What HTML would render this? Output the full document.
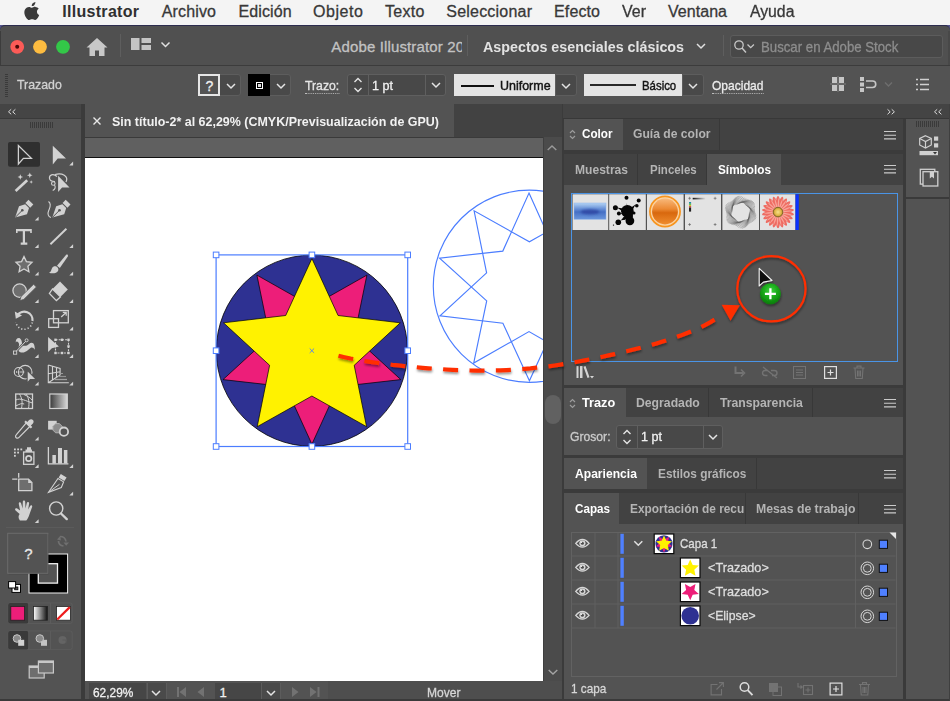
<!DOCTYPE html>
<html lang="es"><head><meta charset="utf-8"><title>Illustrator</title>
<style>
html,body{margin:0;padding:0;}
body{width:950px;height:701px;overflow:hidden;background:#3b3b3b;font-family:"Liberation Sans",sans-serif;position:relative;}
.a{position:absolute;}
.t{position:absolute;white-space:nowrap;line-height:1;}
svg{position:absolute;overflow:visible;}
</style></head><body>
<div class="a" style="left:0.0px;top:0.0px;width:950.0px;height:25.0px;background:#f4f4f4;"></div><svg style="left:24px;top:2px" width="15.400" height="18.200" viewBox="0 0 13.900 16.400" preserveAspectRatio="none"><path fill="#3a3a3a" d="M10.3 0c.1 1-.3 1.900-.9 2.600-.6.700-1.500 1.200-2.400 1.100-.1-.9.300-1.900.9-2.500C8.500.5 9.500.1 10.300 0zM13.300 6.100c-1 .600-1.600 1.500-1.600 2.700 0 1.400.800 2.500 2 3-.3.900-.700 1.700-1.200 2.500-.700 1-1.400 2-2.500 2s-1.400-.650-2.700-.650S5.700 16.300 4.700 16.300c-1.100 0-1.900-1-2.700-2.100C.4 11.900-.4 8.400 1.200 6.200c.8-1.100 2-1.800 3.300-1.800 1.100 0 2 .7 2.700.7.600 0 1.800-.800 3.100-.700 1.200.050 2.300.600 3 1.700z"/></svg><span class="t" style="left:62.3px;top:4.1px;font-size:16.0px;color:#303030;font-weight:bold;letter-spacing:0.29px;">Illustrator</span><span class="t" style="left:161.7px;top:4.1px;font-size:16.0px;color:#383838;font-weight:normal;letter-spacing:0.16px;-webkit-text-stroke:0.30px #383838;">Archivo</span><span class="t" style="left:238.5px;top:4.1px;font-size:16.0px;color:#383838;font-weight:normal;letter-spacing:0.12px;-webkit-text-stroke:0.30px #383838;">Edición</span><span class="t" style="left:313.0px;top:4.1px;font-size:16.0px;color:#383838;font-weight:normal;letter-spacing:0.53px;-webkit-text-stroke:0.30px #383838;">Objeto</span><span class="t" style="left:385.0px;top:4.1px;font-size:16.0px;color:#383838;font-weight:normal;letter-spacing:0.29px;-webkit-text-stroke:0.30px #383838;">Texto</span><span class="t" style="left:446.3px;top:4.1px;font-size:16.0px;color:#383838;font-weight:normal;letter-spacing:0.21px;-webkit-text-stroke:0.30px #383838;">Seleccionar</span><span class="t" style="left:554.0px;top:4.1px;font-size:16.0px;color:#383838;font-weight:normal;letter-spacing:0.13px;-webkit-text-stroke:0.30px #383838;">Efecto</span><span class="t" style="left:622.0px;top:4.1px;font-size:16.0px;color:#383838;font-weight:normal;transform:scaleX(0.999);transform-origin:0 50%;-webkit-text-stroke:0.30px #383838;">Ver</span><span class="t" style="left:668.0px;top:4.1px;font-size:16.0px;color:#383838;font-weight:normal;letter-spacing:0.04px;-webkit-text-stroke:0.30px #383838;">Ventana</span><span class="t" style="left:749.6px;top:4.1px;font-size:16.0px;color:#383838;font-weight:normal;transform:scaleX(0.985);transform-origin:0 50%;-webkit-text-stroke:0.30px #383838;">Ayuda</span><div class="a" style="left:0.0px;top:24.8px;width:950.0px;height:10.0px;background:#55558c;"></div><div class="a" style="left:0.0px;top:24.8px;width:950.0px;height:40.2px;background:#505050;border-top:1px solid #2c2c4e;box-sizing:border-box;border-radius:5px 5px 0 0;"></div><div class="a" style="left:947.5px;top:31.0px;width:2.5px;height:73.0px;background:#484848;"></div><div class="a" style="left:0.0px;top:31.0px;width:1.2px;height:670.0px;background:#3c3c3c;"></div><svg style="left:0;top:25px" width="120" height="40" viewBox="0 0 120 40"><circle cx="17.200" cy="21.800" r="6.900" fill="#fc5b57"/><circle cx="17.200" cy="21.800" r="2" fill="#4a0a08"/><circle cx="40" cy="21.800" r="6.900" fill="#fdbc40"/><circle cx="63" cy="21.800" r="6.900" fill="#33c748"/><path fill="#c8c8c8" d="M97 13l-10.500 9.500h3V31h5.500v-5.500h4V31h5.500v-8.500h3z"/></svg><div class="a" style="left:120.0px;top:34.0px;width:1.0px;height:23.0px;background:#5e5e5e;"></div><svg style="left:131px;top:38px" width="45" height="16" viewBox="0 0 45 16"><path fill="#c4c4c4" d="M0 0h8.500v12H0zM10.500 0H20v5h-9.500zM10.500 7H20v5h-9.500z"/><path d="M30.500 4.500l4 4 4-4" stroke="#e0e0e0" stroke-width="1.500" fill="none"/></svg><div class="a" style="left:325px;top:32px;width:136.500px;height:28px;overflow:hidden;"><span class="t" style="left:6.3px;top:7.3px;font-size:15.0px;color:#c2c2c2;font-weight:normal;letter-spacing:0.14px;-webkit-text-stroke:0.30px #c2c2c2;">Adobe Illustrator 2020</span></div><div class="a" style="left:467.0px;top:35.0px;width:1.0px;height:21.0px;background:#5e5e5e;"></div><span class="t" style="left:482.5px;top:38.8px;font-size:15.0px;color:#e2e2e2;font-weight:bold;transform:scaleX(0.953);transform-origin:0 50%;">Aspectos esenciales clásicos</span><svg style="left:695px;top:42px" width="12" height="8" viewBox="0 0 12 8"><path d="M2 2l4 4 4-4" stroke="#e0e0e0" stroke-width="1.500" fill="none"/></svg><div class="a" style="left:722.5px;top:35.0px;width:1.0px;height:21.0px;background:#5e5e5e;"></div><div class="a" style="left:730.0px;top:35.0px;width:213.0px;height:23.0px;background:#484848;border:1px solid #5c5c5c;box-sizing:border-box;border-radius:3px;"></div><svg style="left:733px;top:39px" width="24" height="16" viewBox="0 0 24 16"><circle cx="6" cy="6" r="4.200" stroke="#c8c8c8" stroke-width="1.300" fill="none"/><path d="M9 9l4 4.500" stroke="#c8c8c8" stroke-width="1.400"/><path d="M14.500 5.500l3.200 3.200 3.200-3.200" stroke="#c8c8c8" stroke-width="1.300" fill="none"/></svg><span class="t" style="left:760.7px;top:39.5px;font-size:14.5px;color:#8d8d8d;font-weight:normal;transform:scaleX(0.911);transform-origin:0 50%;-webkit-text-stroke:0.30px #8d8d8d;">Buscar en Adobe Stock</span><div class="a" style="left:0.0px;top:65.0px;width:950.0px;height:39.0px;background:#535353;border-top:1px solid #3c3c3c;box-sizing:border-box;"></div><svg style="left:5px;top:74px" width="4" height="24" viewBox="0 0 4 24"><path d="M0 .5h3M0 2.500h3M0 4.500h3M0 6.500h3M0 8.500h3M0 10.500h3M0 12.500h3M0 14.500h3M0 16.500h3M0 18.500h3M0 20.500h3M0 22.500h3" stroke="#3a3a3a" stroke-width="1"/></svg><span class="t" style="left:17.2px;top:78.2px;font-size:13.5px;color:#d2d2d2;font-weight:normal;transform:scaleX(0.914);transform-origin:0 50%;-webkit-text-stroke:0.30px #d2d2d2;">Trazado</span><div class="a" style="left:219.0px;top:74.0px;width:22.0px;height:22.0px;background:#494949;border:1px solid #5d5d5d;box-sizing:border-box;border-radius:0 3px 3px 0;"></div><div class="a" style="left:198.0px;top:74.0px;width:21.5px;height:22.0px;background:#535353;border:2px solid #e6e6e6;box-sizing:border-box;"></div><span class="t" style="left:205.5px;top:78.6px;font-size:14.0px;color:#f0f0f0;font-weight:normal;-webkit-text-stroke:0.30px #f0f0f0;">?</span><svg style="left:224.5px;top:81.5px" width="12" height="8" viewBox="0 0 12 8"><path d="M2 2l4 4 4-4" stroke="#e4e4e4" stroke-width="1.500" fill="none"/></svg><div class="a" style="left:269.0px;top:74.0px;width:22.0px;height:22.0px;background:#494949;border:1px solid #5d5d5d;box-sizing:border-box;border-radius:0 3px 3px 0;"></div><div class="a" style="left:248.0px;top:74.0px;width:21.5px;height:22.0px;background:#000;"></div><div class="a" style="left:255.5px;top:81.5px;width:7.0px;height:7.0px;background:#000;border:1.500px solid #fff;box-sizing:border-box;"></div><div class="a" style="left:257.5px;top:83.5px;width:3.0px;height:3.0px;background:#ddd;"></div><svg style="left:274.5px;top:81.5px" width="12" height="8" viewBox="0 0 12 8"><path d="M2 2l4 4 4-4" stroke="#e4e4e4" stroke-width="1.500" fill="none"/></svg><span class="t" style="left:305.0px;top:78.6px;font-size:13.5px;color:#e6e6e6;font-weight:normal;transform:scaleX(0.906);transform-origin:0 50%;border-bottom:1px dotted #bdbdbd;padding-bottom:1px;-webkit-text-stroke:0.30px #e6e6e6;">Trazo:</span><div class="a" style="left:346.5px;top:73.5px;width:99.5px;height:22.5px;background:#484848;border:1px solid #5f5f5f;box-sizing:border-box;border-radius:3px;"></div><div class="a" style="left:367.5px;top:74.5px;width:1.0px;height:20.5px;background:#5f5f5f;"></div><div class="a" style="left:425.0px;top:74.5px;width:1.0px;height:20.5px;background:#5f5f5f;"></div><svg style="left:351.5px;top:74.8px" width="12" height="20" viewBox="0 0 12 20"><path d="M2.500 7l3.500-3.500L9.500 7M2.500 13l3.500 3.500L9.500 13" stroke="#e4e4e4" stroke-width="1.400" fill="none"/></svg><svg style="left:430.0px;top:81.2px" width="12" height="8" viewBox="0 0 12 8"><path d="M2 2l4 4 4-4" stroke="#e4e4e4" stroke-width="1.500" fill="none"/></svg><span class="t" style="left:372.0px;top:78.6px;font-size:13.5px;color:#f2f2f2;font-weight:normal;transform:scaleX(0.932);transform-origin:0 50%;-webkit-text-stroke:0.30px #f2f2f2;">1 pt</span><div class="a" style="left:555.0px;top:74.0px;width:21.5px;height:22.0px;background:#494949;border:1px solid #5d5d5d;box-sizing:border-box;border-radius:0 3px 3px 0;"></div><div class="a" style="left:453.5px;top:74.0px;width:101.5px;height:22.0px;background:#e4e4e4;"></div><div class="a" style="left:460.5px;top:85.0px;width:33.5px;height:2.0px;background:#111;"></div><span class="t" style="left:499.7px;top:78.6px;font-size:13.5px;color:#141414;font-weight:normal;transform:scaleX(0.924);transform-origin:0 50%;-webkit-text-stroke:0.45px #141414;">Uniforme</span><svg style="left:560.0px;top:81.5px" width="12" height="8" viewBox="0 0 12 8"><path d="M2 2l4 4 4-4" stroke="#e4e4e4" stroke-width="1.500" fill="none"/></svg><div class="a" style="left:682.0px;top:74.0px;width:21.5px;height:22.0px;background:#494949;border:1px solid #5d5d5d;box-sizing:border-box;border-radius:0 3px 3px 0;"></div><div class="a" style="left:584.0px;top:74.0px;width:98.0px;height:22.0px;background:#e4e4e4;"></div><div class="a" style="left:590.0px;top:84.0px;width:45.5px;height:2.0px;background:#2a2a2a;"></div><span class="t" style="left:641.8px;top:78.6px;font-size:13.5px;color:#141414;font-weight:normal;transform:scaleX(0.844);transform-origin:0 50%;-webkit-text-stroke:0.45px #141414;">Básico</span><svg style="left:687.0px;top:81.5px" width="12" height="8" viewBox="0 0 12 8"><path d="M2 2l4 4 4-4" stroke="#e4e4e4" stroke-width="1.500" fill="none"/></svg><span class="t" style="left:712.0px;top:78.6px;font-size:13.5px;color:#ececec;font-weight:normal;transform:scaleX(0.891);transform-origin:0 50%;border-bottom:1px dotted #bdbdbd;padding-bottom:1px;-webkit-text-stroke:0.30px #ececec;">Opacidad</span><svg style="left:830px;top:76px" width="110" height="18" viewBox="0 0 110 18"><path fill="#c6c6c6" d="M2 1h5v6H2zM9 1h5v6H9zM2 9h5v6H2zM9 9h5v6H9z"/><path d="M0 8h16M8 0v16" stroke="#8a8a8a" stroke-width="0.800"/><path fill="#c6c6c6" d="M30 1h4v4h-4zM30 6.500h4v4h-4zM30 12h4v4h-4z"/><path d="M36 5h6.500a3 3 0 0 1 0 6.500H36" stroke="#c6c6c6" stroke-width="1.600" fill="none"/><path d="M55 6.500l3.500 3.500 3.500-3.500" stroke="#6e6e6e" stroke-width="1.400" fill="none"/><path d="M86 3.500h2M86 8.500h2M86 13.500h2M90 3.500h9M90 8.500h9M90 13.500h9" stroke="#d0d0d0" stroke-width="1.700"/></svg><div class="a" style="left:0.0px;top:103.5px;width:950.0px;height:1.0px;background:#404040;"></div><div class="a" style="left:0.0px;top:104.0px;width:81.0px;height:15.0px;background:#454545;border-bottom:1px solid #3a3a3a;box-sizing:border-box;"></div><div class="a" style="left:0.0px;top:119.0px;width:81.0px;height:582.0px;background:#535353;"></div><div class="a" style="left:81.0px;top:104.0px;width:3.5px;height:597.0px;background:#3b3b3b;"></div><svg style="left:7.8px;top:108.9px" width="8" height="6" viewBox="0 0 8 6"><path d="M3.200 .3L.5 2.800l2.700 2.500M7.400 .3L4.700 2.800l2.700 2.500" fill="none" stroke="#dcdcdc" stroke-width="1"/></svg><svg style="left:29.500px;top:122px" width="24" height="7" viewBox="0 0 24 7"><path d="M.5 0v6M2.500 0v6M4.500 0v6M6.500 0v6M8.500 0v6M10.500 0v6M12.500 0v6M14.500 0v6M16.500 0v6M18.500 0v6M20.500 0v6M22.500 0v6" stroke="#3a3a3a" stroke-width="1"/></svg><div class="a" style="left:84.5px;top:104.0px;width:477.0px;height:33.0px;background:#424242;"></div><div class="a" style="left:84.5px;top:104.0px;width:369.5px;height:33.0px;background:#535353;"></div><svg style="left:92px;top:116px" width="10" height="10" viewBox="0 0 10 10"><path d="M1.500 1.500l7 7M8.500 1.500l-7 7" stroke="#e8e8e8" stroke-width="1.400"/></svg><span class="t" style="left:112.0px;top:114.5px;font-size:13.0px;color:#f2f2f2;font-weight:bold;transform:scaleX(0.959);transform-origin:0 50%;">Sin título-2* al 62,29% (CMYK/Previsualización de GPU)</span><div class="a" style="left:84.5px;top:137.0px;width:458.5px;height:20.0px;background:#606060;border-top:1px solid #3a3a3a;box-sizing:border-box;"></div><div class="a" style="left:84.5px;top:156.5px;width:458.5px;height:524.5px;background:#fff;border-top:1.500px solid #111;box-sizing:border-box;"></div><div class="a" style="left:543.0px;top:137.0px;width:18.5px;height:544.0px;background:#4b4b4b;border-left:1px solid #3f3f3f;box-sizing:border-box;"></div><svg style="left:546.400px;top:144.200px" width="12" height="8" viewBox="0 0 12 8"><path d="M1.700 6l4.300-4 4.300 4" stroke="#9a9a9a" stroke-width="1.400" fill="none"/></svg><svg style="left:546.600px;top:668px" width="12" height="8" viewBox="0 0 12 8"><path d="M1.700 2l4.300 4 4.300-4" stroke="#a4a4a4" stroke-width="1.400" fill="none"/></svg><div class="a" style="left:544.6px;top:395.0px;width:16.0px;height:28.7px;background:#616161;border-radius:8px;"></div><div class="a" style="left:84.5px;top:681.0px;width:477.0px;height:20.0px;background:#535353;"></div><div class="a" style="left:88.5px;top:683.0px;width:57.5px;height:18.0px;background:#464646;"></div><span class="t" style="left:92.7px;top:685.6px;font-size:13.0px;color:#f0f0f0;font-weight:normal;transform:scaleX(0.914);transform-origin:0 50%;-webkit-text-stroke:0.30px #f0f0f0;">62,29%</span><div class="a" style="left:146.5px;top:683.0px;width:20.0px;height:18.0px;background:#4a4a4a;border-left:1px solid #5c5c5c;border-right:1px solid #5c5c5c;box-sizing:border-box;"></div><svg style="left:150.0px;top:688.5px" width="12" height="8" viewBox="0 0 12 8"><path d="M2 2l4 4 4-4" stroke="#e4e4e4" stroke-width="1.500" fill="none"/></svg><svg style="left:175px;top:686px" width="150" height="12" viewBox="0 0 150 12"><path fill="#727272" d="M2 1h2v10H2zM11 1v10L4.500 6zM29 1v10L22.500 6z"/><path fill="#727272" d="M117 1v10l6.500-5zM135 1v10l6.500-5zM142.500 1h2v10h-2z"/></svg><div class="a" style="left:215.0px;top:683.0px;width:45.5px;height:18.0px;background:#464646;"></div><span class="t" style="left:219.5px;top:685.6px;font-size:13.0px;color:#f0f0f0;font-weight:normal;-webkit-text-stroke:0.30px #f0f0f0;">1</span><div class="a" style="left:260.5px;top:683.0px;width:20.5px;height:18.0px;background:#4a4a4a;border-left:1px solid #5c5c5c;border-right:1px solid #5c5c5c;box-sizing:border-box;"></div><svg style="left:264.5px;top:688.5px" width="12" height="8" viewBox="0 0 12 8"><path d="M2 2l4 4 4-4" stroke="#e4e4e4" stroke-width="1.500" fill="none"/></svg><div class="a" style="left:328.0px;top:681.0px;width:233.5px;height:20.0px;background:#4e4e4e;"></div><span class="t" style="left:427.0px;top:685.6px;font-size:13.0px;color:#d6d6d6;font-weight:normal;transform:scaleX(0.927);transform-origin:0 50%;-webkit-text-stroke:0.30px #d6d6d6;">Mover</span><div class="a" style="left:561.5px;top:104.0px;width:388.5px;height:597.0px;background:#3b3b3b;"></div><div class="a" style="left:563.2px;top:104.0px;width:386.8px;height:14.0px;background:#444444;"></div><div class="a" style="left:563.2px;top:117.8px;width:386.8px;height:1.2px;background:#383838;"></div><svg style="left:887.3px;top:108.9px" width="8" height="6" viewBox="0 0 8 6"><path d="M.5 .3l2.700 2.500-2.700 2.500M4.700 .3l2.700 2.500-2.700 2.500" fill="none" stroke="#dcdcdc" stroke-width="1"/></svg><svg style="left:934.3px;top:108.9px" width="8" height="6" viewBox="0 0 8 6"><path d="M3.200 .3L.5 2.800l2.700 2.500M7.400 .3L4.700 2.800l2.700 2.500" fill="none" stroke="#dcdcdc" stroke-width="1"/></svg><div class="a" style="left:563.6px;top:119.0px;width:339.4px;height:31.0px;background:#424242;"></div><div class="a" style="left:563.8px;top:119.0px;width:59.4px;height:31.0px;background:#535353;"></div><span class="t" style="left:582.0px;top:127.2px;font-size:13.0px;color:#ffffff;font-weight:bold;transform:scaleX(0.898);transform-origin:0 50%;">Color</span><div class="a" style="left:623.2px;top:119.0px;width:97.2px;height:31.0px;background:#424242;border-right:1px solid #383838;box-sizing:border-box;"></div><span class="t" style="left:633.3px;top:127.2px;font-size:13.0px;color:#b4b4b4;font-weight:bold;transform:scaleX(0.933);transform-origin:0 50%;">Guía de color</span><svg style="left:884.0px;top:130px" width="12" height="10" viewBox="0 0 12 10"><path d="M0 1.500h12M0 5.200h12M0 8.900h12" stroke="#cacaca" stroke-width="1.100"/></svg><svg style="left:569.0px;top:129.0px" width="7" height="11" viewBox="0 0 7 11"><path d="M1 4l2.500-2.500L6 4M1 7l2.500 2.500L6 7" stroke="#9c9c9c" stroke-width="1.200" fill="none"/></svg><div class="a" style="left:563.6px;top:153.5px;width:339.4px;height:31.0px;background:#424242;"></div><div class="a" style="left:563.8px;top:153.5px;width:74.5px;height:31.0px;background:#424242;border-right:1px solid #383838;box-sizing:border-box;"></div><span class="t" style="left:575.2px;top:162.6px;font-size:13.0px;color:#b4b4b4;font-weight:bold;transform:scaleX(0.929);transform-origin:0 50%;">Muestras</span><div class="a" style="left:638.3px;top:153.5px;width:69.0px;height:31.0px;background:#424242;border-right:1px solid #383838;box-sizing:border-box;"></div><span class="t" style="left:649.7px;top:162.6px;font-size:13.0px;color:#b4b4b4;font-weight:bold;transform:scaleX(0.885);transform-origin:0 50%;">Pinceles</span><div class="a" style="left:707.3px;top:153.5px;width:73.3px;height:31.0px;background:#535353;"></div><span class="t" style="left:718.0px;top:162.6px;font-size:13.0px;color:#ffffff;font-weight:bold;transform:scaleX(0.906);transform-origin:0 50%;">Símbolos</span><svg style="left:884.0px;top:164px" width="12" height="10" viewBox="0 0 12 10"><path d="M0 1.500h12M0 5.200h12M0 8.900h12" stroke="#cacaca" stroke-width="1.100"/></svg><div class="a" style="left:563.6px;top:184.5px;width:339.4px;height:200.0px;background:#535353;"></div><div class="a" style="left:570.5px;top:192.5px;width:327.0px;height:169.0px;background:#535353;border:1px solid #4a94e6;box-sizing:border-box;"></div><div class="a" style="left:563.6px;top:388.0px;width:339.4px;height:29.0px;background:#424242;"></div><div class="a" style="left:563.8px;top:388.0px;width:61.8px;height:29.0px;background:#535353;"></div><span class="t" style="left:582.0px;top:395.9px;font-size:13.0px;color:#ffffff;font-weight:bold;transform:scaleX(0.980);transform-origin:0 50%;">Trazo</span><div class="a" style="left:625.6px;top:388.0px;width:83.6px;height:29.0px;background:#424242;border-right:1px solid #383838;box-sizing:border-box;"></div><span class="t" style="left:635.5px;top:395.9px;font-size:13.0px;color:#b4b4b4;font-weight:bold;transform:scaleX(0.940);transform-origin:0 50%;">Degradado</span><div class="a" style="left:709.2px;top:388.0px;width:104.3px;height:29.0px;background:#424242;border-right:1px solid #383838;box-sizing:border-box;"></div><span class="t" style="left:720.3px;top:395.9px;font-size:13.0px;color:#b4b4b4;font-weight:bold;transform:scaleX(0.940);transform-origin:0 50%;">Transparencia</span><svg style="left:884.0px;top:398px" width="12" height="10" viewBox="0 0 12 10"><path d="M0 1.500h12M0 5.200h12M0 8.900h12" stroke="#cacaca" stroke-width="1.100"/></svg><svg style="left:569.0px;top:397.5px" width="7" height="11" viewBox="0 0 7 11"><path d="M1 4l2.500-2.500L6 4M1 7l2.500 2.500L6 7" stroke="#9c9c9c" stroke-width="1.200" fill="none"/></svg><div class="a" style="left:563.6px;top:417.0px;width:339.4px;height:38.0px;background:#535353;"></div><span class="t" style="left:570.3px;top:429.6px;font-size:13.5px;color:#cccccc;font-weight:normal;transform:scaleX(0.900);transform-origin:0 50%;-webkit-text-stroke:0.30px #cccccc;">Grosor:</span><div class="a" style="left:615.5px;top:425.0px;width:107.5px;height:23.5px;background:#484848;border:1px solid #5f5f5f;box-sizing:border-box;border-radius:3px;"></div><div class="a" style="left:636.5px;top:426.0px;width:1.0px;height:21.5px;background:#5f5f5f;"></div><div class="a" style="left:702.5px;top:426.0px;width:1.0px;height:21.5px;background:#5f5f5f;"></div><svg style="left:620.5px;top:426.8px" width="12" height="20" viewBox="0 0 12 20"><path d="M2.500 7l3.500-3.500L9.500 7M2.500 13l3.500 3.500L9.500 13" stroke="#e4e4e4" stroke-width="1.400" fill="none"/></svg><svg style="left:707.2px;top:433.2px" width="12" height="8" viewBox="0 0 12 8"><path d="M2 2l4 4 4-4" stroke="#e4e4e4" stroke-width="1.500" fill="none"/></svg><span class="t" style="left:641.0px;top:430.1px;font-size:13.5px;color:#f2f2f2;font-weight:normal;transform:scaleX(0.932);transform-origin:0 50%;-webkit-text-stroke:0.30px #f2f2f2;">1 pt</span><div class="a" style="left:563.6px;top:457.9px;width:339.4px;height:31.6px;background:#424242;"></div><div class="a" style="left:563.8px;top:457.9px;width:83.5px;height:31.6px;background:#535353;"></div><span class="t" style="left:574.7px;top:466.5px;font-size:13.0px;color:#ffffff;font-weight:bold;transform:scaleX(0.931);transform-origin:0 50%;">Apariencia</span><div class="a" style="left:647.3px;top:457.9px;width:109.7px;height:31.6px;background:#424242;border-right:1px solid #383838;box-sizing:border-box;"></div><span class="t" style="left:657.6px;top:466.5px;font-size:13.0px;color:#b4b4b4;font-weight:bold;transform:scaleX(0.913);transform-origin:0 50%;">Estilos gráficos</span><svg style="left:884.0px;top:469px" width="12" height="10" viewBox="0 0 12 10"><path d="M0 1.500h12M0 5.200h12M0 8.900h12" stroke="#cacaca" stroke-width="1.100"/></svg><div class="a" style="left:563.6px;top:493.2px;width:339.4px;height:30.8px;background:#424242;"></div><div class="a" style="left:563.6px;top:493.2px;width:55.8px;height:30.8px;background:#535353;"></div><span class="t" style="left:574.7px;top:501.5px;font-size:13.0px;color:#fff;font-weight:bold;transform:scaleX(0.897);transform-origin:0 50%;">Capas</span><div class="a" style="left:619.7px;top:493px;width:126px;height:31px;overflow:hidden;border-right:1px solid #383838;box-sizing:border-box;"><span class="t" style="left:10.3px;top:8.5px;font-size:13.0px;color:#b4b4b4;font-weight:bold;transform:scaleX(0.914);transform-origin:0 50%;">Exportación de recursos</span></div><div class="a" style="left:745.7px;top:493.0px;width:113.0px;height:31.0px;background:#424242;border-right:1px solid #383838;box-sizing:border-box;"></div><span class="t" style="left:756.0px;top:501.5px;font-size:13.0px;color:#b4b4b4;font-weight:bold;transform:scaleX(0.943);transform-origin:0 50%;">Mesas de trabajo</span><svg style="left:884.0px;top:504px" width="12" height="10" viewBox="0 0 12 10"><path d="M0 1.500h12M0 5.200h12M0 8.900h12" stroke="#cacaca" stroke-width="1.100"/></svg><div class="a" style="left:563.6px;top:524.0px;width:339.4px;height:177.0px;background:#535353;"></div><div class="a" style="left:570.5px;top:531.5px;width:326.0px;height:145.5px;background:#535353;border:1px solid #626262;box-sizing:border-box;"></div><div class="a" style="left:905.6px;top:119.0px;width:44.4px;height:582.0px;background:#535353;"></div><div class="a" style="left:903.4px;top:119.0px;width:2.2px;height:582.0px;background:#3a3a3a;"></div><div class="a" style="left:906.0px;top:197.0px;width:44.0px;height:1.5px;background:#3a3a3a;"></div><svg style="left:916px;top:121px" width="24" height="7" viewBox="0 0 24 7"><path d="M.5 0v6M2.500 0v6M4.500 0v6M6.500 0v6M8.500 0v6M10.500 0v6M12.500 0v6M14.500 0v6M16.500 0v6M18.500 0v6M20.500 0v6M22.500 0v6" stroke="#3a3a3a" stroke-width="1"/></svg><svg style="left:0;top:0" width="950" height="701" viewBox="0 0 950 701"><defs><clipPath id="cv"><rect x="84.500" y="158" width="458.500" height="523"/></clipPath><filter id="ds" x="-5%" y="-20%" width="110%" height="150%"><feDropShadow dx="0" dy="1.500" stdDeviation="1.200" flood-color="#000" flood-opacity="0.450"/></filter></defs><g clip-path="url(#cv)"><circle cx="311.9" cy="350.7" r="95.600" fill="#2e3192" stroke="#000" stroke-width="0.800"/><polygon points="311.9,444.2 285.7,386.7 223.0,379.6 269.6,336.9 256.9,275.1 311.9,306.2 366.9,275.1 354.2,336.9 400.8,379.6 338.1,386.7" fill="#ed1e79" stroke="#000" stroke-width="0.700"/><polygon points="311.9,258.5 338.1,315.5 400.3,322.8 354.2,365.3 366.6,426.7 311.9,396.0 257.2,426.7 269.6,365.3 223.5,322.8 285.7,315.5" fill="#fff200" stroke="#000" stroke-width="0.700"/><rect x="216.100" y="254.900" width="191.600" height="191.600" fill="none" stroke="#4b7dff" stroke-width="1.200"/><rect x="213.3" y="252.1" width="5.600" height="5.600" fill="#fff" stroke="#4b7dff" stroke-width="1"/><rect x="213.3" y="347.9" width="5.600" height="5.600" fill="#fff" stroke="#4b7dff" stroke-width="1"/><rect x="213.3" y="443.7" width="5.600" height="5.600" fill="#fff" stroke="#4b7dff" stroke-width="1"/><rect x="309.1" y="252.1" width="5.600" height="5.600" fill="#fff" stroke="#4b7dff" stroke-width="1"/><rect x="309.1" y="443.7" width="5.600" height="5.600" fill="#fff" stroke="#4b7dff" stroke-width="1"/><rect x="404.9" y="252.1" width="5.600" height="5.600" fill="#fff" stroke="#4b7dff" stroke-width="1"/><rect x="404.9" y="347.9" width="5.600" height="5.600" fill="#fff" stroke="#4b7dff" stroke-width="1"/><rect x="404.9" y="443.7" width="5.600" height="5.600" fill="#fff" stroke="#4b7dff" stroke-width="1"/><path d="M309.700 348.500l4.400 4.400M314.100 348.500l-4.400 4.400" stroke="#4b7dff" stroke-width="0.900"/><g fill="none" stroke="#4b7dff" stroke-width="1.150"><circle cx="529.4" cy="286.2" r="96.100"/><polygon points="529.4,380.8 502.9,323.2 440.0,315.8 486.6,272.9 474.1,210.8 529.4,241.8 584.7,210.8 572.2,272.9 618.8,315.8 555.9,323.2"/><polygon points="529.0,193.1 555.2,251.1 618.4,258.1 571.3,300.9 584.3,363.1 529.0,331.6 473.7,363.1 486.7,300.9 439.6,258.1 502.8,251.1"/></g></g></svg><svg style="left:0;top:0" width="950" height="701" viewBox="0 0 950 701"><defs><linearGradient id="g1" x1="0" y1="0" x2="0" y2="1"><stop offset="0" stop-color="#b4d4f4"/><stop offset="0.350" stop-color="#6a92d8"/><stop offset="0.550" stop-color="#456fc4"/><stop offset="1" stop-color="#6a96dc"/></linearGradient><filter id="bl1" x="-30%" y="-100%" width="160%" height="300%"><feGaussianBlur stdDeviation="1.300"/></filter><linearGradient id="g3" x1="0" y1="0" x2="0" y2="1"><stop offset="0" stop-color="#f8b87a"/><stop offset="0.400" stop-color="#ec8a34"/><stop offset="0.550" stop-color="#d8680e"/><stop offset="1" stop-color="#ef8c2e"/></linearGradient><linearGradient id="g4" x1="0" y1="0" x2="1" y2="0"><stop offset="0" stop-color="#111"/><stop offset="1" stop-color="#111" stop-opacity="0"/></linearGradient><radialGradient id="g6"><stop offset="0" stop-color="#f4e08a"/><stop offset="0.650" stop-color="#e2b84a"/><stop offset="1" stop-color="#b08a2a"/></radialGradient></defs><rect x="572.6" y="194.3" width="35.6" height="35.7" fill="#e3e3e3"/><rect x="609.2" y="194.3" width="36.6" height="35.7" fill="#e3e3e3"/><rect x="647.0" y="194.3" width="36.6" height="35.7" fill="#e3e3e3"/><rect x="685.0" y="194.3" width="36.0" height="35.7" fill="#e3e3e3"/><rect x="722.4" y="194.3" width="36.6" height="35.7" fill="#e3e3e3"/><rect x="760.0" y="194.3" width="35.4" height="35.7" fill="#e3e3e3"/><rect x="574" y="203" width="32" height="16.300" fill="url(#g1)"/><ellipse cx="590" cy="211.800" rx="9.500" ry="2.600" fill="#2a3f9e" opacity="0.750" filter="url(#bl1)"/><rect x="574" y="203" width="32" height="16.300" fill="none" stroke="#8fb4ea" stroke-width="0.500"/><g fill="#050505"><circle cx="627.400" cy="211.300" r="6.300"/><circle cx="629.900" cy="220.800" r="4.400"/><ellipse cx="629" cy="216" rx="4" ry="4.500"/><circle cx="626.5" cy="197.8" r="2.0"/><circle cx="638.7" cy="200.4" r="2.0"/><circle cx="636.8" cy="205.8" r="1.8"/><circle cx="615.4" cy="207.7" r="2.5"/><circle cx="618.9" cy="213.4" r="2.0"/><circle cx="618.3" cy="222.2" r="2.8"/><circle cx="613.5" cy="225.1" r="0.7"/><circle cx="634.0" cy="213.0" r="1.5"/><circle cx="624.0" cy="218.5" r="1.3"/><path d="M627 211L626.700 203L628.500 211zM629 209L635.500 204.500L632 211zM626 209L617 207.500L624 212.500zM625 212L620 213.500L626 214.500zM626 215L620.500 220.500L628 219z" stroke="none"/></g><circle cx="665" cy="211.500" r="15.100" fill="#fbd3a2" stroke="#f7941e" stroke-width="1.700"/><circle cx="665" cy="211.500" r="12.900" fill="url(#g3)"/><rect x="692.700" y="197.800" width="13" height="1.600" fill="url(#g4)"/><g stroke="#444" stroke-width="0.500"><path d="M689.600 196.800v3M688.200 198.300h2.800M715.100 196.800v3M713.700 198.300h2.800M689.600 223v3M688.200 224.500h2.800M715.100 223v3M713.700 224.500h2.800"/></g><rect x="689" y="202" width="2.100" height="1.400" fill="#28a"/><rect x="689" y="203.400" width="2.100" height="1.400" fill="#3a4"/><rect x="689" y="204.800" width="2.100" height="1.400" fill="#cc3"/><rect x="689" y="206.200" width="2.100" height="1.400" fill="#c33"/><rect x="689" y="207.600" width="2.100" height="4" fill="#222"/><path d="M749.9 208.1L755.7 218.9M750.1 208.9L755.0 220.1M750.1 209.8L753.9 221.1M750.0 210.7L752.7 221.9M749.7 211.6L751.4 222.5M749.5 212.3L750.2 223.1M749.4 213.1L749.1 223.8M749.4 213.9L748.1 224.6M749.4 214.7L747.2 225.6M749.5 215.6L746.2 226.6M749.4 216.5L745.1 227.5M749.3 217.3L743.8 228.2M748.8 218.1L742.4 228.6M748.2 218.7L741.0 228.5M747.5 219.2L739.6 228.1M746.6 219.5L738.3 227.4M745.8 219.7L737.1 226.6M745.0 219.9L736.0 225.9M744.3 220.2L734.9 225.3M743.6 220.5L733.7 224.8M742.9 221.0L732.4 224.5M742.2 221.5L731.0 224.2M741.4 221.9L729.6 223.7M740.5 222.2L728.4 222.9M739.7 222.2L727.4 221.9M738.8 222.0L726.7 220.6M738.0 221.6L726.4 219.2M737.3 221.0L726.3 217.7M736.7 220.4L726.4 216.3M736.2 219.8L726.5 214.9M735.6 219.3L726.5 213.7M734.9 218.9L726.2 212.4M734.2 218.5L725.9 211.1M733.4 218.1L725.5 209.8M732.6 217.6L725.2 208.3M732.0 217.0L725.3 206.9M731.5 216.3L725.7 205.5M731.3 215.5L726.4 204.3M731.3 214.6L727.5 203.3M731.4 213.7L728.7 202.5M731.7 212.8L730.0 201.9M731.9 212.1L731.2 201.3M732.0 211.3L732.3 200.6M732.0 210.5L733.3 199.8M732.0 209.7L734.2 198.8M731.9 208.8L735.2 197.8M732.0 207.9L736.3 196.9M732.1 207.1L737.6 196.2M732.6 206.3L739.0 195.8M733.2 205.7L740.4 195.9M733.9 205.2L741.8 196.3M734.8 204.9L743.1 197.0M735.6 204.7L744.3 197.8M736.4 204.5L745.4 198.5M737.1 204.2L746.5 199.1M737.8 203.9L747.7 199.6M738.5 203.4L749.0 199.9M739.2 202.9L750.4 200.2M740.0 202.5L751.8 200.7M740.9 202.2L753.0 201.5M741.7 202.2L754.0 202.5M742.6 202.4L754.7 203.8M743.4 202.8L755.0 205.2M744.1 203.4L755.1 206.7M744.7 204.0L755.0 208.1M745.2 204.6L754.9 209.5M745.8 205.1L754.9 210.7M746.5 205.5L755.2 212.0M747.2 205.9L755.5 213.3M748.0 206.3L755.9 214.6M748.8 206.8L756.2 216.1M749.4 207.4L756.1 217.5" stroke="#555" stroke-width="0.400" fill="none" opacity="0.900"/><g fill="#ee6c62"><ellipse cx="778" cy="203.800" rx="2.100" ry="7.800" transform="rotate(0.0 778 212.100)"/><ellipse cx="778" cy="203.800" rx="2.100" ry="7.800" transform="rotate(16.4 778 212.100)"/><ellipse cx="778" cy="203.800" rx="2.100" ry="7.800" transform="rotate(32.7 778 212.100)"/><ellipse cx="778" cy="203.800" rx="2.100" ry="7.800" transform="rotate(49.1 778 212.100)"/><ellipse cx="778" cy="203.800" rx="2.100" ry="7.800" transform="rotate(65.5 778 212.100)"/><ellipse cx="778" cy="203.800" rx="2.100" ry="7.800" transform="rotate(81.8 778 212.100)"/><ellipse cx="778" cy="203.800" rx="2.100" ry="7.800" transform="rotate(98.2 778 212.100)"/><ellipse cx="778" cy="203.800" rx="2.100" ry="7.800" transform="rotate(114.5 778 212.100)"/><ellipse cx="778" cy="203.800" rx="2.100" ry="7.800" transform="rotate(130.9 778 212.100)"/><ellipse cx="778" cy="203.800" rx="2.100" ry="7.800" transform="rotate(147.3 778 212.100)"/><ellipse cx="778" cy="203.800" rx="2.100" ry="7.800" transform="rotate(163.6 778 212.100)"/><ellipse cx="778" cy="203.800" rx="2.100" ry="7.800" transform="rotate(180.0 778 212.100)"/><ellipse cx="778" cy="203.800" rx="2.100" ry="7.800" transform="rotate(196.4 778 212.100)"/><ellipse cx="778" cy="203.800" rx="2.100" ry="7.800" transform="rotate(212.7 778 212.100)"/><ellipse cx="778" cy="203.800" rx="2.100" ry="7.800" transform="rotate(229.1 778 212.100)"/><ellipse cx="778" cy="203.800" rx="2.100" ry="7.800" transform="rotate(245.5 778 212.100)"/><ellipse cx="778" cy="203.800" rx="2.100" ry="7.800" transform="rotate(261.8 778 212.100)"/><ellipse cx="778" cy="203.800" rx="2.100" ry="7.800" transform="rotate(278.2 778 212.100)"/><ellipse cx="778" cy="203.800" rx="2.100" ry="7.800" transform="rotate(294.5 778 212.100)"/><ellipse cx="778" cy="203.800" rx="2.100" ry="7.800" transform="rotate(310.9 778 212.100)"/><ellipse cx="778" cy="203.800" rx="2.100" ry="7.800" transform="rotate(327.3 778 212.100)"/><ellipse cx="778" cy="203.800" rx="2.100" ry="7.800" transform="rotate(343.6 778 212.100)"/></g><g fill="#f8a49a"><ellipse cx="778" cy="204.500" rx="0.700" ry="6.200" transform="rotate(3.0 778 212.100)"/><ellipse cx="778" cy="204.500" rx="0.700" ry="6.200" transform="rotate(19.4 778 212.100)"/><ellipse cx="778" cy="204.500" rx="0.700" ry="6.200" transform="rotate(35.7 778 212.100)"/><ellipse cx="778" cy="204.500" rx="0.700" ry="6.200" transform="rotate(52.1 778 212.100)"/><ellipse cx="778" cy="204.500" rx="0.700" ry="6.200" transform="rotate(68.5 778 212.100)"/><ellipse cx="778" cy="204.500" rx="0.700" ry="6.200" transform="rotate(84.8 778 212.100)"/><ellipse cx="778" cy="204.500" rx="0.700" ry="6.200" transform="rotate(101.2 778 212.100)"/><ellipse cx="778" cy="204.500" rx="0.700" ry="6.200" transform="rotate(117.5 778 212.100)"/><ellipse cx="778" cy="204.500" rx="0.700" ry="6.200" transform="rotate(133.9 778 212.100)"/><ellipse cx="778" cy="204.500" rx="0.700" ry="6.200" transform="rotate(150.3 778 212.100)"/><ellipse cx="778" cy="204.500" rx="0.700" ry="6.200" transform="rotate(166.6 778 212.100)"/><ellipse cx="778" cy="204.500" rx="0.700" ry="6.200" transform="rotate(183.0 778 212.100)"/><ellipse cx="778" cy="204.500" rx="0.700" ry="6.200" transform="rotate(199.4 778 212.100)"/><ellipse cx="778" cy="204.500" rx="0.700" ry="6.200" transform="rotate(215.7 778 212.100)"/><ellipse cx="778" cy="204.500" rx="0.700" ry="6.200" transform="rotate(232.1 778 212.100)"/><ellipse cx="778" cy="204.500" rx="0.700" ry="6.200" transform="rotate(248.5 778 212.100)"/><ellipse cx="778" cy="204.500" rx="0.700" ry="6.200" transform="rotate(264.8 778 212.100)"/><ellipse cx="778" cy="204.500" rx="0.700" ry="6.200" transform="rotate(281.2 778 212.100)"/><ellipse cx="778" cy="204.500" rx="0.700" ry="6.200" transform="rotate(297.5 778 212.100)"/><ellipse cx="778" cy="204.500" rx="0.700" ry="6.200" transform="rotate(313.9 778 212.100)"/><ellipse cx="778" cy="204.500" rx="0.700" ry="6.200" transform="rotate(330.3 778 212.100)"/><ellipse cx="778" cy="204.500" rx="0.700" ry="6.200" transform="rotate(346.6 778 212.100)"/></g><circle cx="778" cy="212.100" r="4.800" fill="url(#g6)" stroke="#6e5a1c" stroke-width="0.800"/><rect x="795.500" y="194.300" width="3.300" height="35.700" fill="#0a32ff"/></svg><svg style="left:0;top:0" width="950" height="701" viewBox="0 0 950 701"><g transform="translate(576.500 366)"><path fill="#d4d4d4" d="M0 0h2v12H0zM3.500 0h2.500v12H3.500zM7 .8l2-.8 4 11.200-2 .8z"/><path fill="#d4d4d4" d="M13.500 10h4l-2 2.500z"/></g><g transform="translate(734 366.500)" fill="none" stroke="#737373" stroke-width="2"><path d="M1.500 0v6.500h8"/><path d="M7 3l3.500 3.500L7 10" stroke-width="1.600"/></g><g transform="translate(761 366)" fill="none" stroke="#737373" stroke-width="1.400"><path d="M7 4.500H4a2.500 2.500 0 0 0 0 5h2.500M10 4.500h3.500a2.500 2.500 0 0 1 0 5H11M2 1l14 11"/></g><g transform="translate(793 366)" fill="none" stroke="#737373" stroke-width="1"><rect x=".5" y=".5" width="12" height="12"/><path d="M3 4h7M3 6.500h7M3 9h7" /></g><g transform="translate(824 366)" fill="none" stroke="#e0e0e0" stroke-width="1.200"><rect x=".6" y=".6" width="11.800" height="11.800"/><path d="M6.500 3.500v6M3.500 6.500h6"/></g><g transform="translate(853.500 365.500)" fill="none" stroke="#737373" stroke-width="1.100"><path d="M0 2.500h11M3.500 2.500V.6h4v1.900M1.500 2.500l.7 10.500h6.600l.7-10.500M4 5v6M5.500 5v6M7 5v6"/></g></svg><svg style="left:0;top:0" width="950" height="701" viewBox="0 0 950 701"><rect x="571.500" y="555.5" width="324" height="1" fill="#606060"/><rect x="571.500" y="579.5" width="324" height="1" fill="#606060"/><rect x="571.500" y="603.5" width="324" height="1" fill="#606060"/><rect x="571.500" y="627.5" width="324" height="1" fill="#606060"/><rect x="594.500" y="533" width="1" height="95" fill="#606060"/><rect x="617.500" y="533" width="1" height="95" fill="#606060"/><rect x="855" y="533" width="1" height="95" fill="#606060"/><path d="M575.7 543.3q6.700-7.800 13.400 0q-6.700 7.800-13.400 0z" fill="none" stroke="#d6d6d6" stroke-width="1.300"/><circle cx="582.4" cy="543.3" r="3.100" fill="#d6d6d6"/><circle cx="582.4" cy="543.3" r="1.500" fill="#4a4a4a"/><circle cx="581.5" cy="542.4" r="0.700" fill="#e6e6e6"/><rect x="620.400" y="533.8" width="3.400" height="20" fill="#4f80ff"/><circle cx="867.300" cy="544.3" r="4.300" fill="none" stroke="#d6d6d6" stroke-width="1.100"/><rect x="879.300" y="540.2" width="8.200" height="8.200" fill="#4f80ff" stroke="#111" stroke-width="1"/><path d="M575.7 567.3q6.700-7.800 13.400 0q-6.700 7.800-13.400 0z" fill="none" stroke="#d6d6d6" stroke-width="1.300"/><circle cx="582.4" cy="567.3" r="3.100" fill="#d6d6d6"/><circle cx="582.4" cy="567.3" r="1.500" fill="#4a4a4a"/><circle cx="581.5" cy="566.4" r="0.700" fill="#e6e6e6"/><rect x="620.400" y="557.8" width="3.400" height="20" fill="#4f80ff"/><circle cx="867.300" cy="568.3" r="6.300" fill="none" stroke="#d6d6d6" stroke-width="1"/><circle cx="867.300" cy="568.3" r="3.900" fill="none" stroke="#d6d6d6" stroke-width="1"/><rect x="879.300" y="564.2" width="8.200" height="8.200" fill="#4f80ff" stroke="#111" stroke-width="1"/><path d="M575.7 591.3q6.700-7.800 13.400 0q-6.700 7.800-13.400 0z" fill="none" stroke="#d6d6d6" stroke-width="1.300"/><circle cx="582.4" cy="591.3" r="3.100" fill="#d6d6d6"/><circle cx="582.4" cy="591.3" r="1.500" fill="#4a4a4a"/><circle cx="581.5" cy="590.4" r="0.700" fill="#e6e6e6"/><rect x="620.400" y="581.8" width="3.400" height="20" fill="#4f80ff"/><circle cx="867.300" cy="592.3" r="6.300" fill="none" stroke="#d6d6d6" stroke-width="1"/><circle cx="867.300" cy="592.3" r="3.900" fill="none" stroke="#d6d6d6" stroke-width="1"/><rect x="879.300" y="588.2" width="8.200" height="8.200" fill="#4f80ff" stroke="#111" stroke-width="1"/><path d="M575.7 615.3q6.700-7.800 13.400 0q-6.700 7.800-13.400 0z" fill="none" stroke="#d6d6d6" stroke-width="1.300"/><circle cx="582.4" cy="615.3" r="3.100" fill="#d6d6d6"/><circle cx="582.4" cy="615.3" r="1.500" fill="#4a4a4a"/><circle cx="581.5" cy="614.4" r="0.700" fill="#e6e6e6"/><rect x="620.400" y="605.8" width="3.400" height="20" fill="#4f80ff"/><circle cx="867.300" cy="616.3" r="6.300" fill="none" stroke="#d6d6d6" stroke-width="1"/><circle cx="867.300" cy="616.3" r="3.900" fill="none" stroke="#d6d6d6" stroke-width="1"/><rect x="879.300" y="612.2" width="8.200" height="8.200" fill="#4f80ff" stroke="#111" stroke-width="1"/><path d="M634.300 541.300l4 4 4-4" stroke="#e0e0e0" stroke-width="1.500" fill="none"/><path d="M889.500 532.500h6.500v6.500z" fill="#e6e6e6"/><rect x="654.2" y="534.0" width="19.600" height="19.600" fill="#fff" stroke="#0a0a0a" stroke-width="1.200"/><circle cx="664" cy="543.800" r="8.600" fill="#2e3192"/><polygon points="664.0,552.4 661.6,547.1 655.8,546.5 660.1,542.5 658.9,536.8 664.0,539.7 669.1,536.8 667.9,542.5 672.2,546.5 666.4,547.1" fill="#ed1e79"/><polygon points="664.0,535.5 666.4,540.7 672.0,541.3 667.8,545.1 668.9,550.7 664.0,547.9 659.1,550.7 660.2,545.1 656.0,541.3 661.6,540.7" fill="#fff200"/><rect x="680.4" y="558.0" width="19.600" height="19.600" fill="#fff" stroke="#0a0a0a" stroke-width="1.200"/><polygon points="690.2,559.4 692.7,564.9 698.8,565.6 694.3,569.7 695.5,575.7 690.2,572.7 684.9,575.7 686.1,569.7 681.6,565.6 687.7,564.9" fill="#fff200"/><rect x="680.4" y="582.0" width="19.600" height="19.600" fill="#fff" stroke="#0a0a0a" stroke-width="1.200"/><polygon points="690.2,600.2 687.7,594.7 681.6,594.0 686.1,589.9 684.9,583.9 690.2,586.9 695.5,583.9 694.3,589.9 698.8,594.0 692.7,594.7" fill="#ed1e79"/><rect x="680.4" y="606.0" width="19.600" height="19.600" fill="#fff" stroke="#0a0a0a" stroke-width="1.200"/><circle cx="690.200" cy="615.800" r="8.800" fill="#2e3192"/><g transform="translate(710.500 682)" fill="none" stroke="#737373" stroke-width="1.100"><path d="M7 2.500H.6v10.400h10.400V7"/><path d="M6 7.500L12.500 1M8.500.6h4.400V5"/></g><g transform="translate(739 681.500)" fill="none" stroke="#dcdcdc" stroke-width="1.500"><circle cx="5.500" cy="5.500" r="4.300"/><path d="M8.700 8.700l4.800 5" stroke-width="1.900"/></g><g transform="translate(769 683)" stroke="#737373" stroke-width="1"><rect x=".5" y=".5" width="8" height="8" fill="#737373"/><rect x="4" y="4" width="8.500" height="8.500" fill="none"/></g><g transform="translate(797 683)" fill="none" stroke="#737373" stroke-width="1.100"><path d="M1 0v4h4M3.500 2.500l1.700 1.500-1.700 1.500"/><rect x="6.500" y="2.500" width="9" height="9"/><path d="M11 4.500v5M8.500 7h5"/></g><g transform="translate(829.500 682.500)" fill="none" stroke="#e0e0e0" stroke-width="1.200"><rect x=".6" y=".6" width="11.800" height="11.800"/><path d="M6.500 3.500v6M3.500 6.500h6"/></g><g transform="translate(859 682)" fill="none" stroke="#737373" stroke-width="1.100"><path d="M0 2.500h11M3.500 2.500V.6h4v1.900M1.500 2.500l.7 10.500h6.600l.7-10.500M4 5v6M5.500 5v6M7 5v6"/></g></svg><span class="t" style="left:680.3px;top:537.1px;font-size:13.5px;color:#dedede;font-weight:normal;transform:scaleX(0.854);transform-origin:0 50%;-webkit-text-stroke:0.30px #dedede;">Capa 1</span><span class="t" style="left:707.7px;top:561.2px;font-size:13.5px;color:#dedede;font-weight:normal;transform:scaleX(0.938);transform-origin:0 50%;-webkit-text-stroke:0.30px #dedede;">&lt;Trazado&gt;</span><span class="t" style="left:707.7px;top:585.2px;font-size:13.5px;color:#dedede;font-weight:normal;transform:scaleX(0.938);transform-origin:0 50%;-webkit-text-stroke:0.30px #dedede;">&lt;Trazado&gt;</span><span class="t" style="left:707.7px;top:609.2px;font-size:13.5px;color:#dedede;font-weight:normal;transform:scaleX(0.906);transform-origin:0 50%;-webkit-text-stroke:0.30px #dedede;">&lt;Elipse&gt;</span><span class="t" style="left:571.3px;top:681.6px;font-size:13.5px;color:#d6d6d6;font-weight:normal;transform:scaleX(0.871);transform-origin:0 50%;-webkit-text-stroke:0.30px #d6d6d6;">1 capa</span><svg style="left:0;top:0" width="950" height="701" viewBox="0 0 950 701"><g transform="translate(919 135)" fill="none" stroke="#d0d0d0" stroke-width="1.200"><path d="M6.500 .7l5.800 2.800v6.500l-5.800 3-5.800-3V3.500z"/><path d="M.7 3.500l5.800 3 5.800-3M6.500 6.500V13"/></g><rect x="934" y="136.500" width="4.200" height="4.200" fill="#d0d0d0"/><rect x="934" y="143.300" width="4.200" height="4.200" fill="#d0d0d0"/><rect x="919.500" y="151" width="18.500" height="4.200" fill="#d0d0d0"/><path d="M933 152h4l-2 2.500z" fill="#333"/><g fill="none" stroke="#d0d0d0" stroke-width="1.300"><rect x="920.300" y="169.300" width="14.500" height="14.800"/><rect x="923" y="171.700" width="14.800" height="14.300" fill="#535353"/></g><path d="M929.800 171.700h4.200v6.800l-2.100-1.800-2.100 1.800z" fill="#d0d0d0"/></svg><svg style="left:0;top:0" width="84" height="701" viewBox="0 0 84 701"><rect x="8" y="142" width="32" height="24.700" rx="2" fill="#2f2f2f"/><path d="M73.1 165.4v-3.800l-3.800 3.800z" fill="#d2d2d2"/><path d="M38.6 220.5v-3.800l-3.800 3.800z" fill="#d2d2d2"/><path d="M38.6 248.0v-3.800l-3.800 3.800z" fill="#d2d2d2"/><path d="M73.1 248.0v-3.800l-3.800 3.800z" fill="#d2d2d2"/><path d="M38.6 275.5v-3.800l-3.800 3.800z" fill="#d2d2d2"/><path d="M73.1 275.5v-3.800l-3.800 3.800z" fill="#d2d2d2"/><path d="M38.6 303.0v-3.800l-3.800 3.800z" fill="#d2d2d2"/><path d="M73.1 303.0v-3.800l-3.800 3.800z" fill="#d2d2d2"/><path d="M38.6 330.5v-3.800l-3.800 3.800z" fill="#d2d2d2"/><path d="M73.1 330.5v-3.800l-3.800 3.800z" fill="#d2d2d2"/><path d="M38.6 358.0v-3.800l-3.800 3.800z" fill="#d2d2d2"/><path d="M73.1 358.0v-3.800l-3.800 3.800z" fill="#d2d2d2"/><path d="M38.6 385.5v-3.800l-3.800 3.800z" fill="#d2d2d2"/><path d="M73.1 385.5v-3.800l-3.800 3.800z" fill="#d2d2d2"/><path d="M38.6 440.5v-3.800l-3.800 3.800z" fill="#d2d2d2"/><path d="M38.6 468.0v-3.800l-3.800 3.800z" fill="#d2d2d2"/><path d="M73.1 468.0v-3.800l-3.800 3.800z" fill="#d2d2d2"/><path d="M73.1 495.5v-3.800l-3.800 3.800z" fill="#d2d2d2"/><path d="M38.6 523.0v-3.800l-3.800 3.800z" fill="#d2d2d2"/><path d="M18.400 145.500v18.500l5-5.600h8z" fill="none" stroke="#d2d2d2" stroke-width="1.300" stroke-linejoin="miter"/><path d="M52.800 145.800v18.700l4.900-6h8.300z" fill="#d2d2d2"/><path d="M15.600 191l11.600-10.800" stroke="#d2d2d2" stroke-width="2.600"/><path d="M20.3 174.2l0.78 2.02 2.02 0.78 -2.02 0.78 -0.78 2.02 -0.78 -2.02 -2.02 -0.78 2.02 -0.78z" fill="#d2d2d2"/><path d="M29.8 172.4l0.78 2.02 2.02 0.78 -2.02 0.78 -0.78 2.02 -0.78 -2.02 -2.02 -0.78 2.02 -0.78z" fill="#d2d2d2"/><path d="M31.2 180.2l0.50 1.30 1.30 0.50 -1.30 0.50 -0.50 1.30 -0.50 -1.30 -1.30 -0.50 1.30 -0.50z" fill="#d2d2d2"/><path d="M57 176.500c-4-3.500-8-1.500-7.500 2 .3 2.200 3 3 5.500 3M66 182c3-6-4-9.500-11-7.500" fill="none" stroke="#d2d2d2" stroke-width="1.200"/><circle cx="53.300" cy="183.500" r="1.800" fill="none" stroke="#d2d2d2" stroke-width="1.100"/><path d="M54.500 185c1.500 2.500.5 4.500-1.800 5.500" fill="none" stroke="#d2d2d2" stroke-width="1.100"/><path d="M58.100 175.700v16.300l4-4.600h7.400z" fill="#d2d2d2"/><g transform="translate(0.0 0)"><path d="M15.100 217.500l3.900-11.200 6.200-2 3.800 3.800-2 6.200z" fill="#d2d2d2"/><path d="M15.100 217.500l6.800-6.800" stroke="#535353" stroke-width="1"/><circle cx="22.300" cy="210.300" r="1.300" fill="#535353"/><path d="M25.400 202.900l3.100-3.100 4.800 4.800-3.100 3.100z" fill="#d2d2d2"/></g><g transform="translate(37.2 0)"><path d="M15.100 217.500l3.900-11.200 6.200-2 3.800 3.800-2 6.200z" fill="#d2d2d2"/><path d="M15.100 217.500l6.800-6.800" stroke="#535353" stroke-width="1"/><circle cx="22.300" cy="210.300" r="1.300" fill="#535353"/><path d="M25.400 202.900l3.100-3.100 4.800 4.800-3.100 3.100z" fill="#d2d2d2"/></g><path d="M48.500 201.500c3.500 2.500 1.500 6 .2 9-1.300 3-.7 6.500 2.300 7" fill="none" stroke="#d2d2d2" stroke-width="1.100"/><path d="M16 229h15.800v4h-1.600v-1.800h-5.200v11.200h2.300v2.300h-6.600v-2.300h2.100v-11.200h-5.200v1.800H16z" fill="#d2d2d2"/><path d="M50.400 244.300l16-15.500" stroke="#d2d2d2" stroke-width="1.900"/><polygon points="24.0,256.5 26.4,261.6 32.0,262.3 27.9,266.2 28.9,271.7 24.0,269.0 19.1,271.7 20.1,266.2 16.0,262.3 21.6,261.6" fill="#6e6e6e" stroke="#d2d2d2" stroke-width="1.300"/><path d="M66.200 254.800c1.200-.6 2.200.4 1.600 1.600l-8 11.600-2.800-2.200z" fill="#d2d2d2"/><path d="M49 272.800c2-.8 2.200-2.800 3-4.600 1.200-2.400 4.200-2.400 5.600-.6 1.600 2 .6 4.400-1.600 5.200-2.200.8-5 .6-7 0z" fill="#d2d2d2"/><circle cx="19.600" cy="290.600" r="6.700" fill="#6e6e6e" stroke="#d2d2d2" stroke-width="1.300"/><path d="M33.600 284.200l2.800 2.800-12.600 12.400-4 1.200 1.200-4z" fill="#d2d2d2" stroke="#535353" stroke-width="0.800"/><path d="M60 281.600l7.800 8-7.400 7.300-7.900-7.900z" fill="#d2d2d2"/><path d="M52.500 289l7.900 7.900-4 3.700-7-7.200z" fill="none" stroke="#d2d2d2" stroke-width="1.300"/><path d="M17.500 315.200A8.300 8.300 0 0 1 32.500 321" fill="none" stroke="#d2d2d2" stroke-width="2.200"/><path d="M14.800 311.500l1 7.200 6.200-3.200z" fill="#d2d2d2"/><path d="M32.300 322.500A8.300 8.300 0 0 1 15.900 322" fill="none" stroke="#d2d2d2" stroke-width="1.600" stroke-dasharray="1.200 2.100"/><rect x="53.500" y="310.600" width="14.800" height="12.200" fill="none" stroke="#d2d2d2" stroke-width="1.300"/><rect x="48.700" y="318.700" width="9.800" height="8.700" fill="none" stroke="#d2d2d2" stroke-width="1.300"/><path d="M61.200 317l4.600-4.200M62.800 312.300h3.400v3.400" fill="none" stroke="#d2d2d2" stroke-width="1.200"/><path d="M19 338C21.500 338.500 22 342 22.200 345C24 346.500 27 346 29 344C31 342 33.500 342.500 34.200 345C34.800 347 34.800 348.500 34.800 349.800C33.500 347.500 32 347 30.500 348C28 350 26 352.500 22.500 352.500C19 352.500 17.500 350.500 18.500 347.500C19.300 345 19.500 343.500 18 342C17 341 16 341.500 15.800 342.500C15.500 340 16.800 338 19 338Z" fill="#d2d2d2"/><path d="M15 352.500l11-11.500" stroke="#535353" stroke-width="2.400"/><path d="M15 352.500l11-11.500" stroke="#d2d2d2" stroke-width="1"/><circle cx="26.600" cy="340.300" r="1.500" fill="#535353" stroke="#d2d2d2" stroke-width="0.900"/><rect x="13.500" y="351" width="3.200" height="3.200" fill="#535353" stroke="#d2d2d2" stroke-width="0.900"/><rect x="55.500" y="339.800" width="13" height="13.200" fill="none" stroke="#d2d2d2" stroke-width="1.100" stroke-dasharray="2 1.200"/><rect x="54.3" y="338.6" width="2.400" height="2.400" fill="#d2d2d2"/><rect x="60.8" y="338.6" width="2.400" height="2.400" fill="#d2d2d2"/><rect x="67.3" y="338.6" width="2.400" height="2.400" fill="#d2d2d2"/><rect x="67.3" y="345.2" width="2.400" height="2.400" fill="#d2d2d2"/><rect x="54.3" y="351.8" width="2.400" height="2.400" fill="#d2d2d2"/><rect x="60.8" y="351.8" width="2.400" height="2.400" fill="#d2d2d2"/><rect x="67.3" y="351.8" width="2.400" height="2.400" fill="#d2d2d2"/><path d="M48.100 337v15l3.800-3.800 7-1.700z" fill="#d2d2d2"/><circle cx="18.800" cy="372" r="4.500" fill="none" stroke="#d2d2d2" stroke-width="1.100"/><circle cx="25.200" cy="372.200" r="6.800" fill="none" stroke="#d2d2d2" stroke-width="1.100"/><path d="M16 372h9" stroke="#d2d2d2" stroke-width="1.300" stroke-dasharray="1.200 1"/><path d="M27.100 370.200v13.200l3.200-3.700h6.200z" fill="#d2d2d2" stroke="#535353" stroke-width="1.200"/><path d="M48.300 365v17.800h20.500M48.300 365l11.800 3.500v6.500L48.300 382.800M48.300 373.800l11.800-2M52.500 366.200v13.500M56.500 367.400v9.500" fill="none" stroke="#d2d2d2" stroke-width="1.100"/><path d="M60.500 373.500h2.500" stroke="#9a9a9a" stroke-width="1"/><path d="M58 376.500h8" stroke="#909090" stroke-width="1.200"/><path d="M55 379.500h12" stroke="#a0a0a0" stroke-width="1.300"/><rect x="15.700" y="394" width="16.800" height="14.500" fill="none" stroke="#d2d2d2" stroke-width="1.300"/><path d="M15.700 400c5-2.500 10 1 16.800 3M19.500 394c3 5 3 9 2 14.500M26 394c3 4 3.500 9 2.500 14.500M15.700 406c4-2 6-3 8.500-2M24 394.500c4 2 6 3 8 5.500" fill="none" stroke="#d2d2d2" stroke-width="1"/><defs><linearGradient id="tg" x1="0" y1="0" x2="1" y2="0"><stop offset="0" stop-color="#3a3a3a"/><stop offset="1" stop-color="#d8d8d8"/></linearGradient></defs><rect x="49.800" y="394" width="17.500" height="14.500" fill="url(#tg)" stroke="#d2d2d2" stroke-width="1.200"/><path transform="translate(0.300 -1.600)" d="M26 424.500l3.500 3.500-11 11.200c-1.200 1.200-3 .4-3.200-.8-.2-1 .2-1.600.8-2.200z" fill="none" stroke="#d2d2d2" stroke-width="1.200"/><path transform="translate(0.300 -1.600)" d="M24 423.500l6.500 6.500 1.500-1.500-1.400-1.400 1.800-1.800c1.200-1.200 1.200-2.800.2-3.800s-2.600-1-3.800.2l-1.800 1.800-1.500-1.500z" fill="#d2d2d2"/><rect x="48.100" y="420.800" width="8.600" height="8.800" fill="#d2d2d2"/><path d="M55.600 423.600h3.800l2.700 2.700v3.800l-2.700 2.700h-3.800l-2.700-2.700v-3.800z" fill="#8c8c8c" stroke="#b8b8b8" stroke-width="0.900"/><circle cx="63.900" cy="431.700" r="4.200" fill="#535353" stroke="#d2d2d2" stroke-width="1.800"/><rect x="14.0" y="448.5" width="1.800" height="1.800" fill="#d2d2d2"/><rect x="17.2" y="448.5" width="1.800" height="1.800" fill="#d2d2d2"/><rect x="20.4" y="448.5" width="1.800" height="1.800" fill="#d2d2d2"/><rect x="14.0" y="451.7" width="1.800" height="1.800" fill="#d2d2d2"/><rect x="17.2" y="451.7" width="1.800" height="1.800" fill="#d2d2d2"/><rect x="14.0" y="454.9" width="1.800" height="1.800" fill="#d2d2d2"/><rect x="23.600" y="452" width="10.300" height="12.300" fill="none" stroke="#d2d2d2" stroke-width="1.300"/><circle cx="28.700" cy="458.500" r="2.700" fill="none" stroke="#d2d2d2" stroke-width="1.700"/><path d="M25.500 449.500h6.500v2.500h-6.500zM27 447.300h4v2.200h-4z" fill="#d2d2d2"/><path d="M48.400 447v16.800h20" fill="none" stroke="#d2d2d2" stroke-width="1.300"/><path d="M52.400 455h3.500v8.500h-3.500zM58 448h4v15.500h-4zM63.900 450h3.500v13.500h-3.500z" fill="#d2d2d2"/><path d="M18.700 473v4.700M12.200 479.200h5.200" stroke="#d2d2d2" stroke-width="1.300"/><path d="M18.700 479.200h9.800l3.400 3.400v8.100H18.700z" fill="#6e6e6e" stroke="#d2d2d2" stroke-width="1.300"/><path d="M28.200 479.200v3.700h3.700z" fill="#d2d2d2"/><path d="M48.500 492.300l9.500-13.800 5.600 3.400-2.300 5.600z" fill="none" stroke="#d2d2d2" stroke-width="1.100"/><path d="M48.500 492.300l11-8" stroke="#d2d2d2" stroke-width="1"/><path d="M58.600 477.500l2.200-3.600 5.800 3.500-2.200 3.600z" fill="#d2d2d2"/><path transform="translate(0.300 1.400)" d="M19.300 512.500l-4-3.500c-1.300-1.200.2-2.900 1.700-1.900l2.800 2-1.300-6.600c-.3-1.700 1.800-2.200 2.300-.6l1.500 5.200.2-6.800c0-1.700 2.300-1.700 2.400 0l.3 6.700 1.300-5.500c.4-1.600 2.500-1.100 2.300.5l-.9 6.200 1.900-3.600c.8-1.400 2.600-.5 2 1l-2.600 7.200c-.8 3-2.200 5.200-3.200 6.400h-6.400c-1.600-2.300-1.900-4.500-.3-6.700z" fill="#d2d2d2"/><circle cx="56.200" cy="508.500" r="6.600" fill="none" stroke="#d2d2d2" stroke-width="1.400"/><path d="M61 513.500l5.800 5.600" stroke="#d2d2d2" stroke-width="2.300" stroke-linecap="round"/><rect x="6" y="527" width="68" height="1" fill="#5b5b5b"/><path d="M60 536.500c3 0 5.500 1.500 6 5M58.500 541c0 2.500 1.500 4.500 5 5" fill="none" stroke="#707070" stroke-width="1.700"/><path d="M63.500 542.500h5.500l-2.800 3.200zM57 539.500l3.300-3.800.6 4.700z" fill="#707070"/><rect x="29" y="554" width="38.600" height="39" fill="#000" stroke="#f0f0f0" stroke-width="1"/><rect x="38.300" y="563.700" width="19.200" height="19.400" fill="#535353" stroke="#f0f0f0" stroke-width="1.300"/><rect x="8.700" y="534.300" width="40" height="40" fill="#000" opacity="0.180"/><rect x="7.700" y="533.300" width="40.200" height="40" fill="#535353" stroke="#6c6c6c" stroke-width="1"/><rect x="12" y="584.400" width="8.500" height="8" fill="#fff" stroke="#000" stroke-width="1"/><rect x="14.700" y="587" width="3.200" height="2.800" fill="#535353" stroke="#000" stroke-width="0.800"/><rect x="8.600" y="581.600" width="7" height="6.400" fill="#fff" stroke="#000" stroke-width="1"/><rect x="8.200" y="603" width="64" height="20.500" rx="2" fill="#535353" stroke="#5e5e5e" stroke-width="0.800"/><rect x="8.200" y="603" width="20.300" height="20.500" rx="2" fill="#3a3a3a"/><path d="M28.800 603v20.500M50.500 603v20.500" stroke="#5e5e5e" stroke-width="0.800"/><rect x="10.800" y="606.400" width="13.800" height="13.800" fill="#ed1e79" stroke="#222" stroke-width="0.800"/><defs><linearGradient id="tg2" x1="0" y1="0" x2="1" y2="0"><stop offset="0" stop-color="#fff"/><stop offset="1" stop-color="#111"/></linearGradient></defs><rect x="33.400" y="606.400" width="14" height="13.800" fill="url(#tg2)" stroke="#222" stroke-width="0.800"/><rect x="56.500" y="606.400" width="14" height="13.800" fill="#fff" stroke="#222" stroke-width="0.800"/><path d="M57.200 619.500l12.600-12.400" stroke="#ee1c1c" stroke-width="2.200"/><rect x="8.200" y="631" width="64" height="18.600" rx="2" fill="#535353" stroke="#5e5e5e" stroke-width="0.800"/><rect x="8.200" y="631" width="20.300" height="18.600" rx="2" fill="#3a3a3a"/><path d="M28.800 631v18.600M50.500 631v18.600" stroke="#5e5e5e" stroke-width="0.800"/><circle cx="17" cy="638.500" r="3.800" fill="#8a8a8a" stroke="#c8c8c8" stroke-width="1"/><rect x="18.200" y="639.800" width="6" height="6" fill="#d2d2d2"/><rect x="41" y="639.800" width="6" height="6" fill="#c4c4c4"/><circle cx="39.800" cy="638.500" r="3.800" fill="#8a8a8a" stroke="#c8c8c8" stroke-width="1"/><circle cx="62.500" cy="640" r="4" fill="#646464"/><path d="M62.500 640h3.500v3.500" fill="none" stroke="#5a5a5a"/><rect x="29.200" y="666" width="15" height="12" fill="#6e6e6e" stroke="#c8c8c8" stroke-width="1.200"/><path d="M29.200 667h15" stroke="#c8c8c8" stroke-width="2"/><rect x="38.400" y="661" width="15" height="12" fill="#6e6e6e" stroke="#c8c8c8" stroke-width="1.200"/><path d="M38.400 662h15" stroke="#c8c8c8" stroke-width="2"/></svg><span class="t" style="left:24.3px;top:545.8px;font-size:15.0px;color:#e8e8e8;font-weight:normal;-webkit-text-stroke:0.30px #e8e8e8;">?</span><svg style="left:0;top:0" width="950" height="701" viewBox="0 0 950 701"><defs><filter id="sh" x="-10%" y="-30%" width="120%" height="170%"><feDropShadow dx="0.500" dy="2" stdDeviation="1.300" flood-color="#000" flood-opacity="0.400"/></filter><radialGradient id="gp" cx="0.500" cy="0.350" r="0.650"><stop offset="0" stop-color="#3fd43f"/><stop offset="0.550" stop-color="#17a617"/><stop offset="1" stop-color="#0a7a0a"/></radialGradient></defs><g filter="url(#sh)"><path d="M338.500 355.800 L344.500 357.200 L350.500 358.500 L356.500 359.600 L362.500 360.700 L368.500 361.600 L374.500 362.500 L380.500 363.300 L386.500 364.000 L392.500 364.800 L398.500 365.400 L404.500 366.100 L410.500 366.700 L416.500 367.200 L422.500 367.800 L428.500 368.300 L434.500 368.700 L440.500 369.100 L446.500 369.500 L452.500 369.800 L458.500 370.100 L464.500 370.300 L470.500 370.500 L476.500 370.600 L482.500 370.600 L488.500 370.600 L494.500 370.500 L500.500 370.300 L506.500 370.100 L512.500 369.800 L518.500 369.400 L524.500 368.900 L530.500 368.400 L536.500 367.700 L542.500 367.100 L548.500 366.300 L554.500 365.500 L560.500 364.600 L566.500 363.600 L572.500 362.600 L578.500 361.500 L584.500 360.400 L590.500 359.200 L596.500 358.000 L602.500 356.700 L608.500 355.400 L614.500 354.100 L620.500 352.700 L626.500 351.300 L632.500 349.800 L638.500 348.300 L644.500 346.700 L650.500 345.100 L656.500 343.400 L662.500 341.600 L668.500 339.700 L674.500 337.700 L680.500 335.600 L686.500 333.300 L692.500 330.900 L698.500 328.200 L704.500 325.300 L710.500 322.100 L716.500 318.500 L722.500 314.600" fill="none" stroke="#ff2d00" stroke-width="4.200" stroke-dasharray="15 11.400"/><path d="M721.600 304.800l18.300 .5-9.400 15.400z" fill="#ff2d00"/><ellipse cx="771.400" cy="288.800" rx="34.200" ry="32.600" fill="none" stroke="#ff2d00" stroke-width="2.200"/></g><path d="M759.200 268.300v17.600l4.200-3.800 8.600-1.600z" fill="#111" stroke="#f4f4f4" stroke-width="1.100" stroke-linejoin="round" filter="url(#sh)"/><circle cx="770.400" cy="293.800" r="10.500" fill="url(#gp)" filter="url(#sh)"/><path d="M770.400 288.300v11M764.900 293.800h11" stroke="#fff" stroke-width="2.300"/></svg><div class="a" style="left:0.0px;top:698.5px;width:950.0px;height:2.5px;background:#3a3a3a;"></div><div class="a" style="left:948.5px;top:104.0px;width:1.5px;height:597.0px;background:#3f3f3f;"></div></body></html>
